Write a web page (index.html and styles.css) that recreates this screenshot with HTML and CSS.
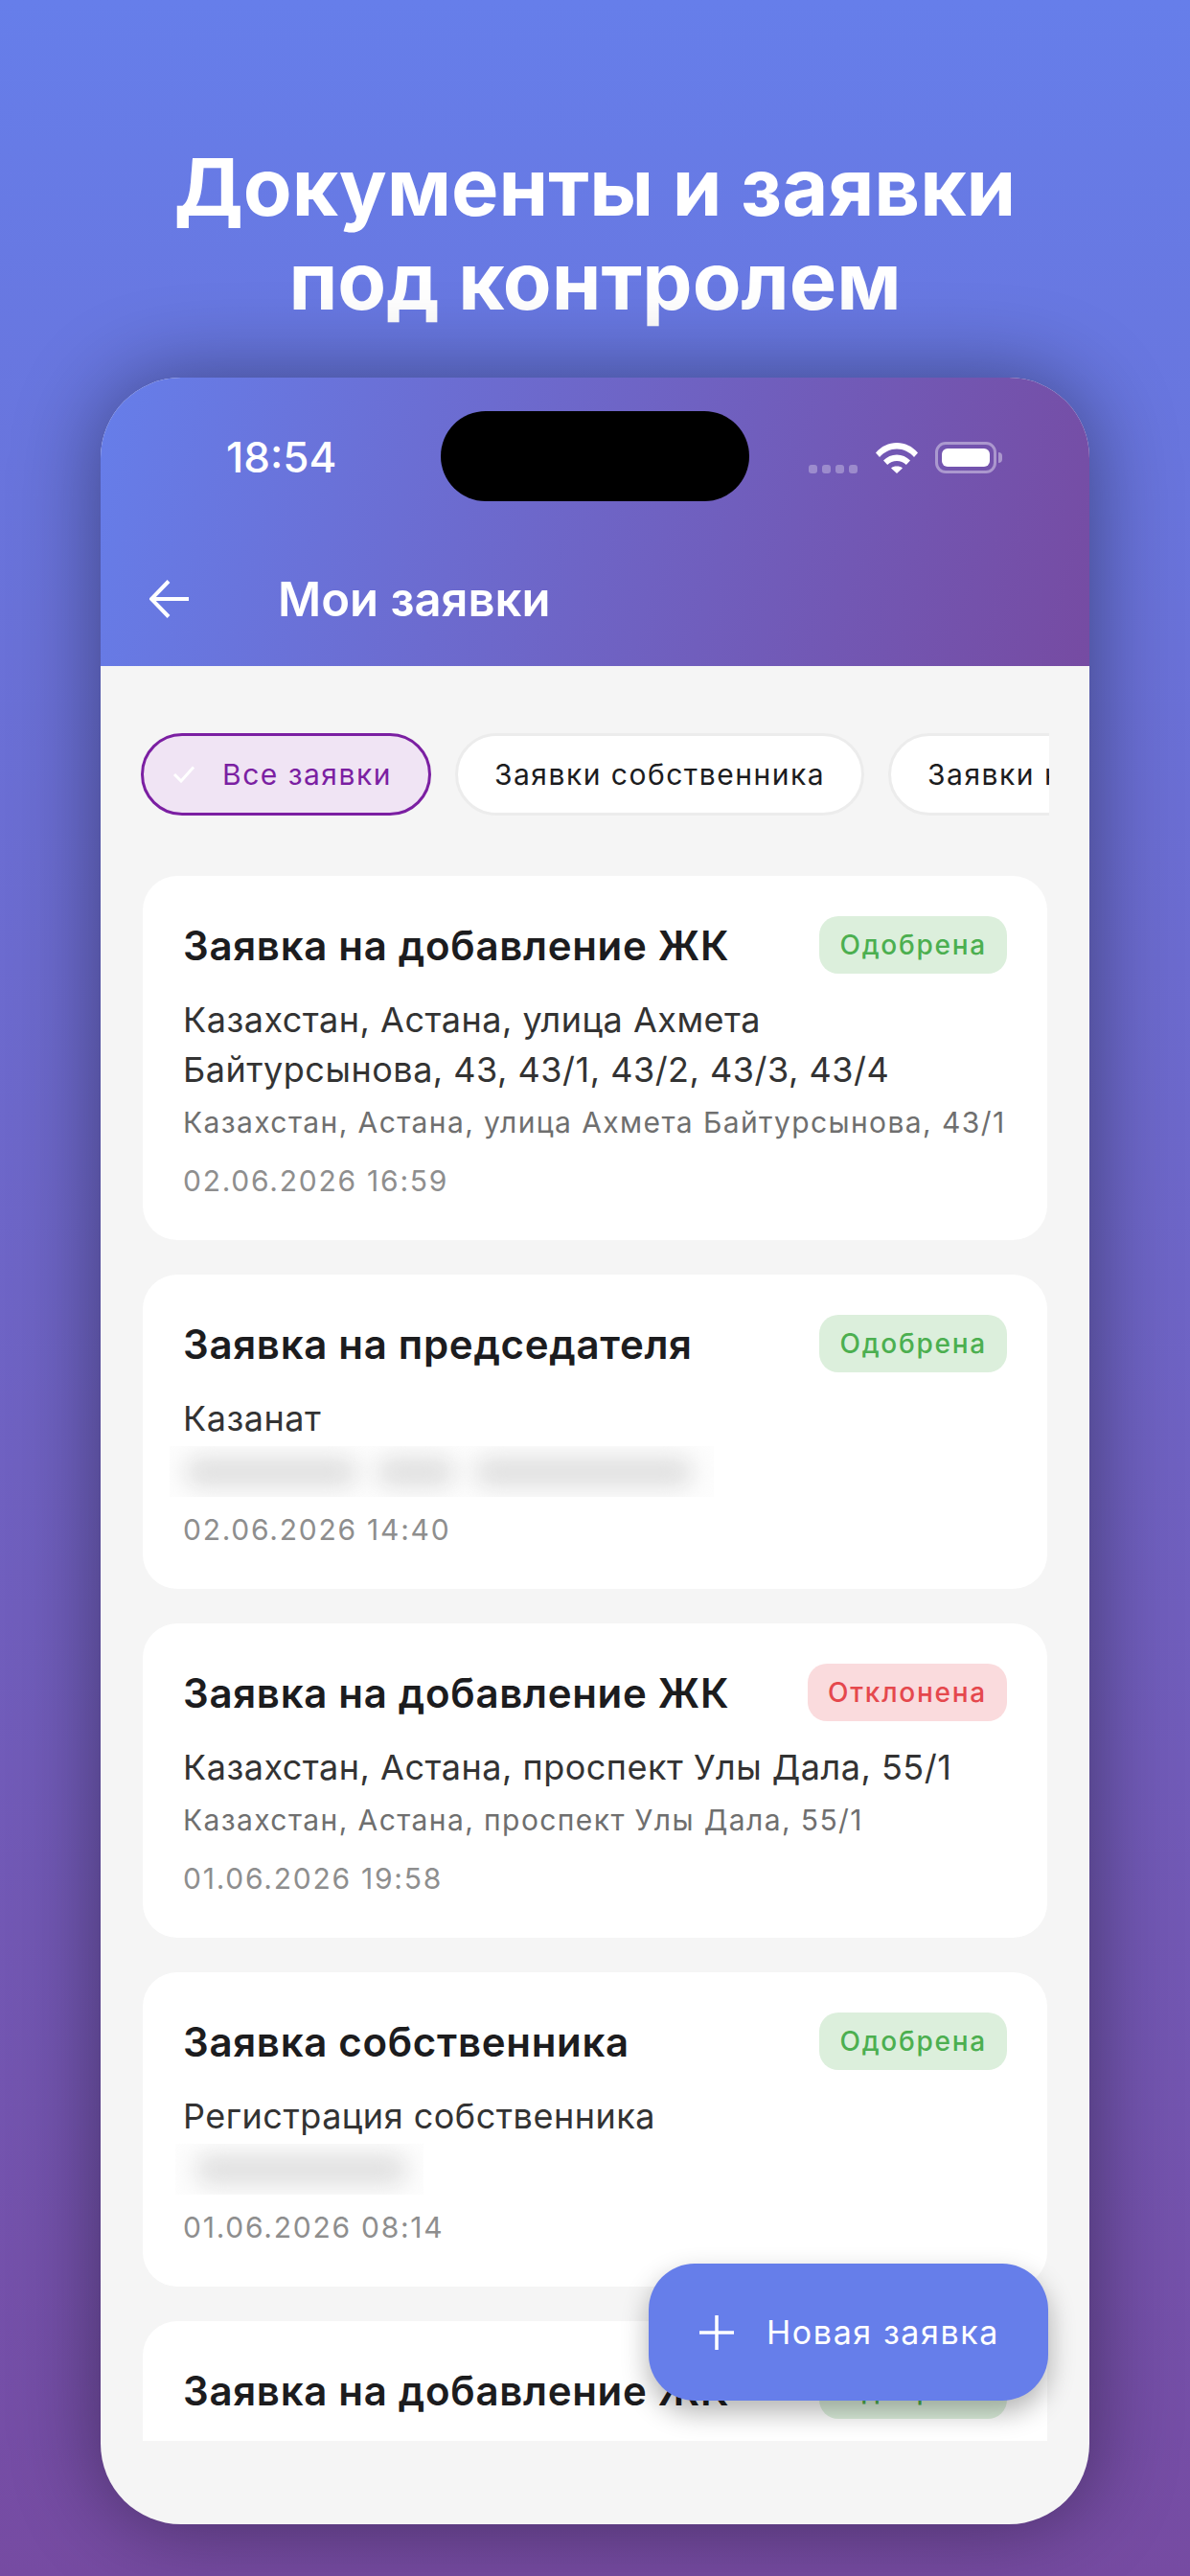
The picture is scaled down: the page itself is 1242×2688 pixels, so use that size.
FILE: index.html
```html
<!DOCTYPE html>
<html lang="ru">

<head>
    <meta charset="UTF-8">
    <meta name="viewport" content="width=device-width, initial-scale=1.0">
    <title>Мои заявки</title>
    <link rel="stylesheet" href="styles.css">
</head>

<body>

    <h1 class="promo-title">Документы и заявки<br>под контролем</h1>

    <div class="phone">
        <header class="app-header">
            <div class="status-bar">
                <span class="status-time">18:54</span>
                <div class="island"></div>
                <div class="status-icons">
                    <div class="signal"><i></i><i></i><i></i><i></i></div>
                    <svg class="wifi" viewBox="0 0 44 33" width="44" height="33">
                        <path d="M0 11.500C6 4.500 13.500 1 22 1s16 3.500 22 10.500l-4 4.500C35 10.500 29 7.500 22 7.500S9 10.500 4 16z" fill="#fff"/>
                        <path d="M8 19.500C12 15.500 16.500 13.500 22 13.500s10 2 14 6l-4.200 4.500C29 21.300 25.800 20 22 20s-7 1.300-9.800 4z" fill="#fff"/>
                        <path d="M16 27.500C17.500 26 19.600 25.500 22 25.500s4.500.5 6 2L22 33z" fill="#fff"/>
                    </svg>
                    <div class="battery"><div class="battery-level"></div></div>
                    <div class="battery-nub"></div>
                </div>
            </div>
            <div class="nav-bar">
                <svg class="back-icon" viewBox="0 0 42 40" width="42" height="40">
                    <path d="M41 20H3M20 1.500L2 20l18 18.500" fill="none" stroke="#fff" stroke-width="4"/>
                </svg>
                <span class="nav-title">Мои заявки</span>
            </div>
        </header>

        <div class="content">
            <div class="chips">
                <div class="chip chip-active">
                    <svg class="chip-check" viewBox="0 0 24 18" width="24" height="18">
                        <path d="M2 9l7 7L22 1.500" fill="none" stroke="#fff" stroke-width="3"/>
                    </svg>
                    Все заявки
                </div>
                <div class="chip">Заявки собственника</div>
                <div class="chip">Заявки на председателя</div>
            </div>

            <div class="card-list">
                <div class="card">
                    <div class="card-head">
                        <span class="card-title">Заявка на добавление ЖК</span>
                        <span class="badge badge-ok">Одобрена</span>
                    </div>
                    <p class="card-text">Казахстан, Астана, улица Ахмета<br>Байтурсынова, 43, 43/1, 43/2, 43/3, 43/4</p>
                    <p class="card-sub">Казахстан, Астана, улица Ахмета Байтурсынова, 43/1</p>
                    <p class="card-date">02.06.2026 16:59</p>
                </div>

                <div class="card">
                    <div class="card-head">
                        <span class="card-title">Заявка на председателя</span>
                        <span class="badge badge-ok">Одобрена</span>
                    </div>
                    <p class="card-text">Казанат</p>
                    <div class="blurred blurred-long"><i class="w-a"></i><i class="w-b"></i><i class="w-c"></i></div>
                    <p class="card-date">02.06.2026 14:40</p>
                </div>

                <div class="card">
                    <div class="card-head">
                        <span class="card-title">Заявка на добавление ЖК</span>
                        <span class="badge badge-no">Отклонена</span>
                    </div>
                    <p class="card-text">Казахстан, Астана, проспект Улы Дала, 55/1</p>
                    <p class="card-sub">Казахстан, Астана, проспект Улы Дала, 55/1</p>
                    <p class="card-date">01.06.2026 19:58</p>
                </div>

                <div class="card">
                    <div class="card-head">
                        <span class="card-title">Заявка собственника</span>
                        <span class="badge badge-ok">Одобрена</span>
                    </div>
                    <p class="card-text">Регистрация собственника</p>
                    <div class="blurred blurred-short"><i class="w-d"></i></div>
                    <p class="card-date">01.06.2026 08:14</p>
                </div>

                <div class="card card-cut">
                    <div class="card-head">
                        <span class="card-title">Заявка на добавление ЖК</span>
                        <span class="badge badge-ok">Одобрена</span>
                    </div>
                </div>
            </div>

            <button class="fab">
                <svg viewBox="0 0 36 36" width="36" height="36">
                    <path d="M18 0v36M0 18h36" stroke="#fff" stroke-width="3.500"/>
                </svg>
                Новая заявка
            </button>
        </div>
    </div>

</body>

</html>
```

FILE: styles.css
```css
* {
    box-sizing: border-box;
}

body {
    margin: 0;
    width: 1242px;
    height: 2688px;
    overflow: hidden;
    font-family: Inter, "Noto Sans", sans-serif;
    background: linear-gradient(180deg, #667eea 0%, #764ba2 100%);
    display: flex;
    flex-direction: column;
    align-items: center;
}

.promo-title {
    margin: 146px 0 0;
    height: 248px;
    color: #fff;
    font-size: 83px;
    line-height: 98px;
    font-weight: 700;
    text-align: center;
}

.phone {
    position: relative;
    width: 1032px;
    height: 2240px;
    border-radius: 84px;
    overflow: hidden;
    background-color: #f5f5f5;
    box-shadow: 0 0 90px rgba(0, 0, 0, 0.42);
}

.app-header {
    height: 301px;
    background: linear-gradient(106deg, #667eea 0%, #764ba2 100%);
    color: #fff;
}

.status-bar {
    position: relative;
    height: 189px;
}

.status-time {
    position: absolute;
    left: 131px;
    top: 58px;
    font-size: 44px;
    line-height: 50px;
    font-weight: 500;
}

.island {
    position: absolute;
    left: 355px;
    top: 35px;
    width: 322px;
    height: 94px;
    border-radius: 47px;
    background-color: #000;
}

.status-icons {
    position: absolute;
    left: 739px;
    top: 67px;
    display: flex;
    align-items: flex-end;
}

.signal {
    display: flex;
    gap: 5px;
    margin-right: 19px;
}

.signal i {
    width: 9px;
    height: 9px;
    border-radius: 3px;
    background-color: rgba(255, 255, 255, 0.3);
}

.wifi {
    display: block;
    margin-right: 18px;
}

.battery {
    width: 64px;
    height: 33px;
    padding: 4px;
    border: 3px solid rgba(255, 255, 255, 0.4);
    border-radius: 11px;
}

.battery-level {
    height: 100%;
    border-radius: 6px;
    background-color: #fff;
}

.battery-nub {
    width: 4px;
    height: 11px;
    margin: 0 0 11px 2px;
    border-radius: 0 4px 4px 0;
    background-color: rgba(255, 255, 255, 0.4);
}

.nav-bar {
    display: flex;
    align-items: center;
    height: 84px;
    padding-left: 51px;
}

.back-icon {
    display: block;
}

.nav-title {
    margin-left: 92px;
    font-size: 49px;
    font-weight: 600;
}

.content {
    padding: 70px 42px 0;
}

.chips {
    display: flex;
    gap: 25px;
    overflow: hidden;
}

.chip {
    flex: none;
    display: flex;
    align-items: center;
    height: 86px;
    padding: 0 38px;
    border: 3px solid #ececec;
    border-radius: 43px;
    background-color: #fff;
    color: #1c1c1e;
    font-size: 30px;
    letter-spacing: 1.500px;
}

.chip-active {
    padding: 0 38px 0 30px;
    border-color: #7b1fa2;
    background-color: #f0e4f4;
    color: #7b1fa2;
}

.chip-check {
    margin-right: 28px;
}

.card-list {
    height: 1633px;
    margin-top: 63px;
    overflow: hidden;
    display: flex;
    flex-direction: column;
    gap: 36px;
    padding-left: 2px;
    padding-right: 2px;
}

.card {
    flex: none;
    padding: 42px;
    border-radius: 36px;
    background-color: #fff;
}

.card-cut {
    height: 328px;
}

.card-head {
    display: flex;
    justify-content: space-between;
    align-items: center;
    height: 60px;
}

.card-title {
    color: #1c1c1e;
    font-size: 42px;
    font-weight: 600;
    letter-spacing: 0.700px;
}

.badge {
    height: 60px;
    padding: 0 21px;
    border-radius: 20px;
    font-size: 28px;
    line-height: 60px;
    font-weight: 500;
    letter-spacing: 1.750px;
}

.badge-ok {
    background-color: #dcefdc;
    color: #4caf50;
}

.badge-no {
    background-color: #fadbdd;
    color: #e5484d;
}

.card-text {
    margin: 22px 0 0;
    color: #333;
    font-size: 36px;
    line-height: 52px;
    letter-spacing: 0.500px;
}

.card-sub {
    margin: 8px 0 0;
    color: #6f6f6f;
    font-size: 30px;
    line-height: 42px;
    letter-spacing: 1.400px;
    white-space: nowrap;
}

.card-date {
    margin: 20px 0 0;
    color: #8e8e8e;
    font-size: 30px;
    line-height: 40px;
    letter-spacing: 1.750px;
}

.blurred {
    display: flex;
    align-items: center;
    height: 53px;
    margin: 3px 0 -6px;
    overflow: hidden;
    background-color: #fdfdfd;
}

.blurred-long {
    width: 568px;
    margin-left: -14px;
    padding-left: 16px;
    gap: 20px;
}

.blurred-short {
    width: 259px;
    margin-left: -8px;
    padding-left: 21px;
}

.blurred i {
    flex: none;
    height: 30px;
    border-radius: 15px;
    background-color: #dedede;
    filter: blur(12px);
}

.w-a {
    width: 180px;
}

.w-b {
    width: 82px;
}

.w-c {
    width: 228px;
}

.w-d {
    width: 221px;
}

.fab {
    position: absolute;
    left: 572px;
    top: 1968px;
    display: flex;
    align-items: center;
    gap: 34px;
    width: 417px;
    height: 143px;
    padding: 0 0 0 53px;
    border: none;
    border-radius: 48px;
    background-color: #667eea;
    color: #fff;
    font-family: inherit;
    font-size: 34px;
    letter-spacing: 1.600px;
    box-shadow: 0 12px 28px rgba(0, 0, 0, 0.3);
}
```
